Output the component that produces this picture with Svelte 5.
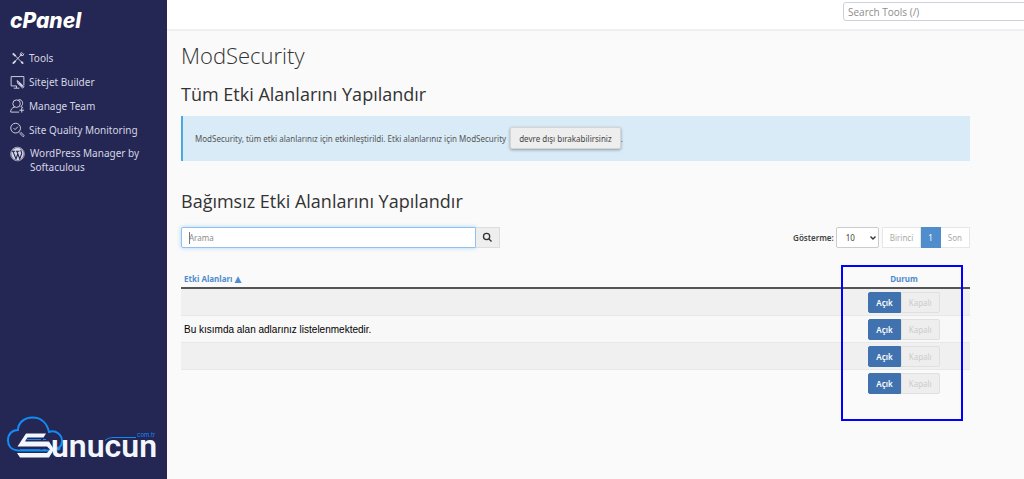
<script lang="ts">
  let search = $state('');
  let pageSize = $state('10');
  let rows = $state([
    { domain: '', on: true },
    { domain: 'Bu kısımda alan adlarınız listelenmektedir.', on: true },
    { domain: '', on: true },
    { domain: '', on: true }
  ]);
</script>

<div class="layout">
  <aside class="sidebar">
    <a class="brand" href="#home">cPanel</a>
    <nav>
      <a href="#tools">
        <svg viewBox="0 0 16 16" aria-hidden="true">
          <path d="M4.5 4.5l9 9M13.5 3l-10 10.5" />
          <path d="M3 3l3 3M12 12l2 2M3 14l3-3" stroke-width="2" />
          <path d="M11 5.5V3.2L13 2M11.5 5.5L14 5.3l.8-2" />
        </svg>
        <span>Tools</span>
      </a>
      <a href="#sitejet">
        <svg viewBox="0 0 16 16" aria-hidden="true">
          <path d="M7 12.2H1.2V2.2h13.6v9.5M7 12.2v2.3M4 14.6h6" />
          <path d="M7.5 6.5l1 3.2 5 4.8 1.4-1.4-5-5zM8.5 9.7l1.4-1.6" />
          <path d="M9.5 9l4 4" stroke-width="2" />
        </svg>
        <span>Sitejet Builder</span>
      </a>
      <a href="#team">
        <svg viewBox="0 0 16 16" aria-hidden="true">
          <circle cx="7" cy="5.5" r="4" />
          <path d="M5 9.2c-3.2.8-4.3 2.5-4.3 5.3h9M9 1.3c5-.8 5.8 5.5 2.5 7.3l2.5 1.2M12.5 10v5M10 12.5h5" />
        </svg>
        <span>Manage Team</span>
      </a>
      <a href="#quality">
        <svg viewBox="0 0 16 16" aria-hidden="true">
          <circle cx="6" cy="6" r="5.2" />
          <path d="M3.8 6l1.6 1.6L8.5 4.4M9.6 9.6l1.2 1.2M10.8 11.9l1.1-1.1 3.3 3.2-1.2 1.2z" />
        </svg>
        <span>Site Quality Monitoring</span>
      </a>
      <a class="wp" href="#wordpress">
        <svg viewBox="0 0 16 16" aria-hidden="true">
          <circle class="disc" cx="8" cy="8" r="6.6" />
          <circle cx="8" cy="8" r="7.3" stroke-width=".7" />
          <path class="mark" d="M2 5h3.5M6.5 5H10M3.2 5.2l3.2 8L8.3 8M7.4 5.2l3 8 2-5.5c.5-1.7-1.2-2.5-.8-4" />
        </svg>
        <span>WordPress Manager by Softaculous</span>
      </a>
    </nav>
    <a class="host" href="#host" aria-label="Sunucun.com.tr">
      <svg viewBox="0 0 152 48" aria-hidden="true">
        <path class="cloud" d="M44 37.5H11C4 37 1 32.5 1 27.5C1 21 5 17 11 17C11 10 17 4.5 25.5 4.5C34 4.5 40 10 42 19C49 16.5 55 22 55 28C55 31 54 33 52 35" />
        <path class="emblem" d="M39 20.5H19L10.5 33.5H40L43 36.5L40 40H10L13 44.5H42L47 36.5L42 28.5H18L20.5 24.5H36.5Z" />
        <path class="cloud thin" d="M20 26.5h14M36 26.5h3M13 36.7h20M36 36.7h3" />
        <circle class="dot" cx="51.5" cy="35.5" r="2" />
        <path class="cloud thin" d="M98 27.5c3-2.5 5-3 10-3h21" />
        <text class="word" x="44" y="44">unucun</text>
        <text class="tld" x="130" y="24">com.tr</text>
      </svg>
    </a>
  </aside>

  <div class="page">
    <header>
      <input type="search" placeholder="Search Tools (/)" aria-label="Search Tools" />
    </header>
    <main>
      <h1>ModSecurity</h1>
      <h2>Tüm Etki Alanlarını Yapılandır</h2>
      <div class="callout">
        ModSecurity, tüm etki alanlarınız için etkinleştirildi. Etki alanlarınız için ModSecurity
        <button type="button">devre dışı bırakabilirsiniz</button>.
      </div>

      <h2>Bağımsız Etki Alanlarını Yapılandır</h2>
      <div class="toolbar">
        <form class="search" onsubmit={(e) => e.preventDefault()}>
          <input type="text" placeholder="Arama" aria-label="Arama" bind:value={search} />
          <button type="submit" aria-label="Ara">
            <svg viewBox="0 0 12 12" aria-hidden="true">
              <circle cx="5" cy="5" r="3.4" />
              <path d="M7.6 7.6l2.8 2.8" />
            </svg>
          </button>
        </form>
        <div class="paging">
          <label for="page-size">Gösterme:</label>
          <div class="select">
            <select id="page-size" bind:value={pageSize}>
              <option>10</option>
              <option>20</option>
              <option>50</option>
            </select>
            <svg viewBox="0 0 8 8" aria-hidden="true"><path d="M1.5 2.5L4 5l2.5-2.5" /></svg>
          </div>
          <div class="pager">
            <button type="button" disabled>Birinci</button>
            <button type="button" class="current">1</button>
            <button type="button" disabled>Son</button>
          </div>
        </div>
      </div>

      <div class="table-wrap">
        <table>
          <thead>
            <tr>
              <th><a href="#domain">Etki Alanları <span class="sort">▲</span></a></th>
              <th class="status"><a href="#status">Durum</a></th>
            </tr>
          </thead>
          <tbody>
            {#each rows as row}
              <tr>
                <td>{row.domain}</td>
                <td class="status">
                  <div class="toggle">
                    <button type="button" class:active={row.on} onclick={() => (row.on = true)}>Açık</button>
                    <button type="button" class:active={!row.on} onclick={() => (row.on = false)}>Kapalı</button>
                  </div>
                </td>
              </tr>
            {/each}
          </tbody>
        </table>
        <div class="highlight"></div>
      </div>
    </main>
  </div>
</div>

<style>
  :global(body) {
    margin: 0;
    background: #fafafa;
  }

  .layout {
    display: flex;
    min-height: 100vh;
    overflow: hidden;
    font-family: 'Noto Sans', 'Open Sans', sans-serif;
    font-size: 8px;
    color: #444;
  }

  a {
    text-decoration: none;
  }

  button,
  input,
  select {
    box-sizing: border-box;
    margin: 0;
    font: inherit;
  }

  .sidebar {
    display: flex;
    flex: 0 0 166px;
    flex-direction: column;
    box-sizing: border-box;
    padding: 9px 8px 18px 10px;
    background: #242653;
  }

  .brand {
    font-family: Inter, sans-serif;
    font-size: 21px;
    font-style: italic;
    font-weight: 800;
    line-height: 24px;
    color: #fff;
  }

  nav {
    display: flex;
    flex-direction: column;
    gap: 8px;
    margin-top: 17px;
  }

  nav a {
    display: flex;
    gap: 4px;
    font-size: 10px;
    line-height: 16px;
    color: #d5d6e3;
  }

  nav svg {
    flex: 0 0 15px;
    width: 15px;
    height: 16px;
    fill: none;
    stroke: #d5d6e3;
    stroke-width: 1;
  }

  nav .wp {
    gap: 5px;
    line-height: 14px;
  }

  nav .disc {
    fill: #d5d6e3;
    stroke: none;
  }

  nav .mark {
    stroke: #242653;
    stroke-width: 1.2;
  }

  .host {
    margin-top: auto;
    margin-left: -3px;
  }

  .host svg {
    display: block;
    width: 152px;
    height: 48px;
    overflow: visible;
  }

  .cloud {
    fill: none;
    stroke: #128cf5;
    stroke-width: 2;
  }

  .thin {
    stroke-width: 1;
  }

  .dot,
  .tld {
    fill: #128cf5;
  }

  .emblem,
  .word {
    fill: #f2f7ff;
  }

  .word {
    font: 600 32px Roboto, sans-serif;
  }

  .tld {
    font: 6px Inter, sans-serif;
  }

  .page {
    flex: 1;
    min-width: 0;
  }

  header {
    display: flex;
    justify-content: flex-end;
    box-sizing: border-box;
    height: 31px;
    padding-top: 2px;
    border-bottom: 2px solid #f0f0f0;
    background: #fff;
  }

  header input {
    width: 190px;
    height: 19px;
    margin-right: -9px;
    padding: 0 4px;
    border: 1px solid #ced0dc;
    border-radius: 3px;
    font-family: 'Open Sans', 'Noto Sans', sans-serif;
    font-size: 10px;
    background: #fff;
  }

  input::placeholder {
    color: #8c8c8c;
    opacity: 1;
  }

  main {
    padding: 7px 54px 24px 14px;
  }

  h1,
  h2 {
    margin: 0;
    font-family: 'Open Sans', 'Noto Sans', sans-serif;
    font-weight: 400;
    color: #333;
  }

  h1 {
    font-size: 22px;
    font-weight: 300;
    line-height: 34px;
  }

  h2 {
    margin: 10px 0;
    font-size: 18px;
    line-height: 24px;
  }

  .callout {
    margin-bottom: 28px;
    padding: 11px 12px;
    border-left: 2px solid #4aa9de;
    line-height: 22px;
    color: #555;
    background: #d9ebf7;
  }

  .callout button {
    height: 22px;
    margin-left: 2px;
    padding: 0 8px;
    border: 1px solid #d5d5d5;
    border-radius: 2px;
    color: #444;
    background: #eee;
    box-shadow: 0 1px 3px rgba(0, 0, 0, 0.35);
  }

  .toolbar {
    display: flex;
    justify-content: space-between;
    margin-top: 14px;
  }

  .search {
    display: flex;
    width: 319px;
  }

  .search input {
    flex: 1;
    min-width: 0;
    height: 21px;
    padding: 0 7px;
    border: 1px solid #8fc2f2;
    border-radius: 2px 0 0 2px;
    outline: none;
    background: linear-gradient(#777, #777) 7px center / 1px 12px no-repeat #fff;
    box-shadow: 0 0 4px rgba(102, 175, 233, 0.5);
  }

  .search button {
    display: grid;
    place-items: center;
    width: 24px;
    padding: 0;
    border: 1px solid #ddd;
    border-left: 0;
    background: #eee;
  }

  .search svg {
    width: 11px;
    height: 11px;
    fill: none;
    stroke: #333;
    stroke-width: 1.4;
  }

  .paging {
    display: flex;
    align-items: center;
  }

  .paging label {
    margin-right: 2px;
    font-weight: 600;
  }

  .select {
    position: relative;
    margin-right: 3px;
  }

  .select select {
    display: block;
    width: 43px;
    height: 21px;
    padding: 0 9px;
    border: 1px solid #ccc;
    border-radius: 2px;
    appearance: none;
    color: #444;
    background: #fff;
  }

  .select svg {
    position: absolute;
    top: 7px;
    right: 2px;
    width: 8px;
    height: 8px;
    fill: none;
    stroke: #333;
    stroke-width: 1.4;
    pointer-events: none;
  }

  .pager,
  .toggle {
    display: inline-flex;
  }

  .pager button {
    height: 21px;
    padding: 0 7px;
    border: 1px solid #e6e6e6;
    color: #aaa;
    background: #fff;
  }

  .pager button + button {
    border-left: 0;
  }

  .pager .current {
    border-color: #4f8dcc;
    color: #fff;
    background: #4f8dcc;
  }

  .table-wrap {
    position: relative;
    margin-top: 21px;
  }

  table {
    width: 100%;
    border-collapse: collapse;
  }

  th {
    height: 18px;
    padding: 0 3px;
    border-bottom: 2px solid #555;
    font-weight: 700;
    text-align: left;
  }

  th a {
    color: #4f8dcc;
  }

  .sort {
    font-family: 'DejaVu Sans', sans-serif;
    font-size: 9px;
    line-height: 8px;
  }

  td {
    height: 26px;
    padding: 0 3px;
    border-top: 1px solid #e8e8e8;
    font-family: 'Liberation Sans', Arial, sans-serif;
    font-size: 10px;
    color: #000;
  }

  tbody tr:nth-child(odd) {
    background: #f0f0f0;
  }

  tbody tr:nth-child(even) {
    background: #f8f8f8;
  }

  tbody tr:last-child {
    background: #fafafa;
  }

  .status {
    width: 126px;
    text-align: center;
  }

  .toggle {
    vertical-align: middle;
    font-family: 'Noto Sans', 'Open Sans', sans-serif;
    font-size: 8px;
  }

  .toggle button {
    height: 21px;
    padding: 0 7px;
    border: 1px solid #e0e0e0;
    border-radius: 0 2px 2px 0;
    color: #ccc;
    background: #eee;
  }

  .toggle button:first-child {
    border-radius: 2px 0 0 2px;
  }

  .toggle .active {
    border-color: #3f72ae;
    font-weight: 600;
    color: #fff;
    background: #3f72ae;
  }

  /* frame around the status column */
  .highlight {
    position: absolute;
    top: -4px;
    right: 7px;
    bottom: -25px;
    box-sizing: border-box;
    width: 122px;
    border: 2px solid #00f;
    pointer-events: none;
  }
</style>
